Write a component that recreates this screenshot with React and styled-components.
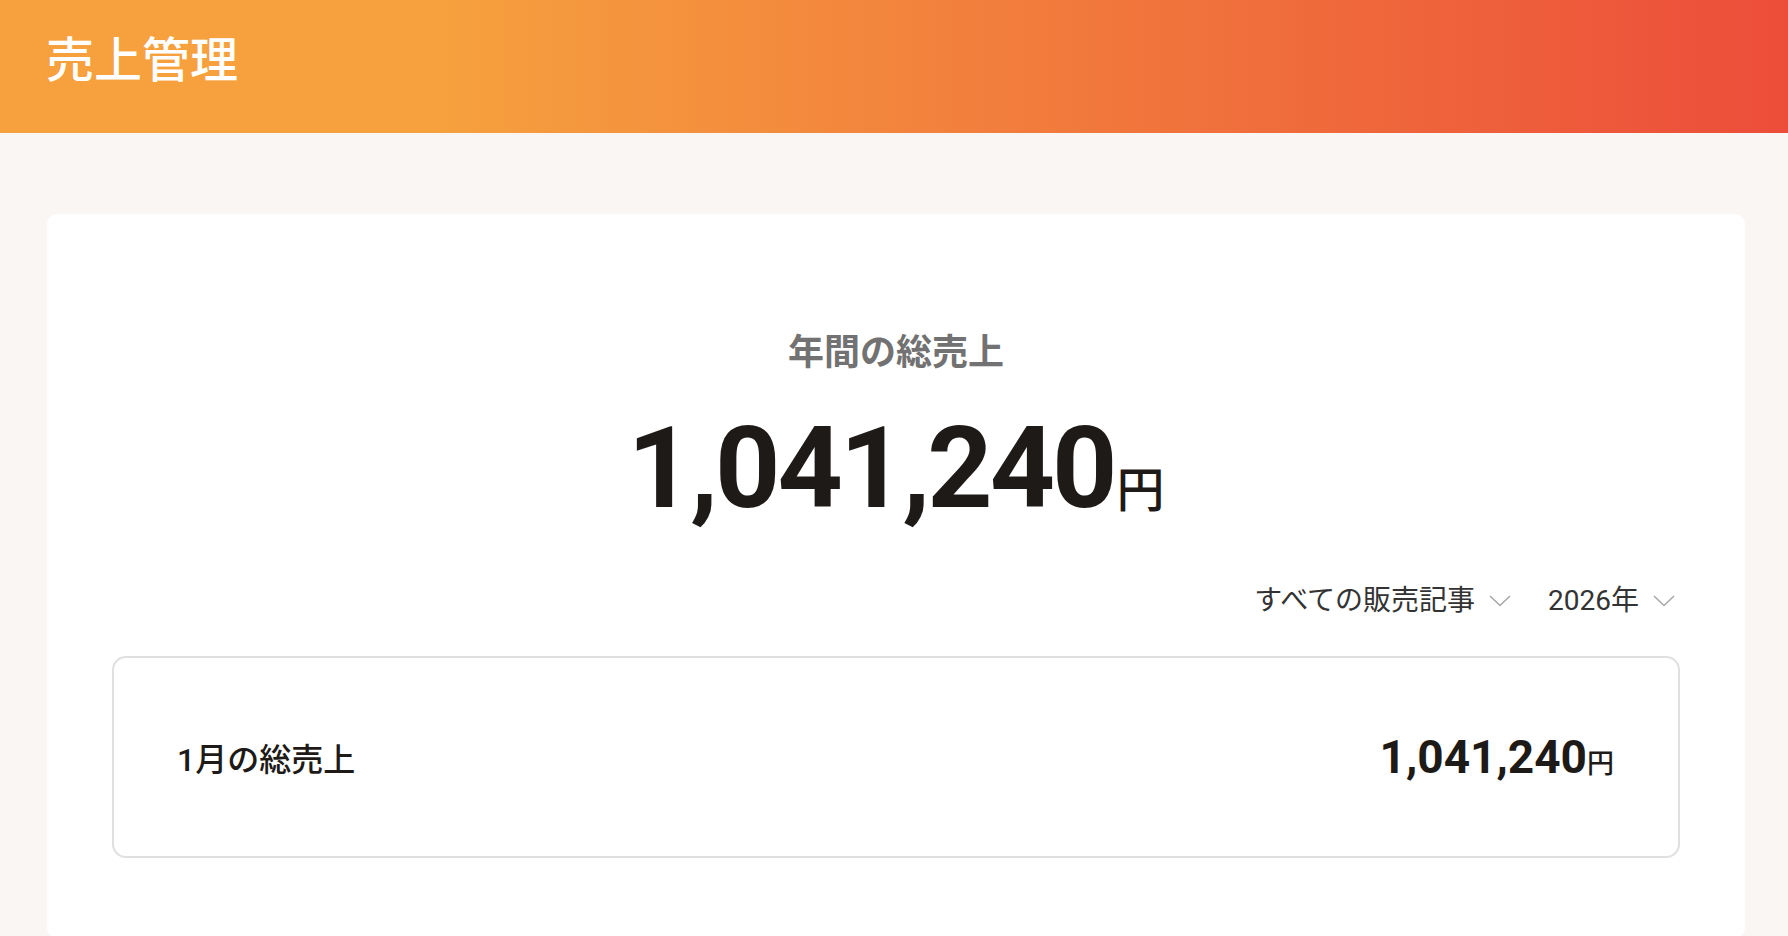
import React from 'react';
import styled, { createGlobalStyle } from 'styled-components';

const GlobalStyle = createGlobalStyle`
  html, body {
    margin: 0;
    padding: 0;
    background: #f9f6f3;
    font-family: Roboto, "Noto Sans CJK JP", sans-serif;
  }
`;

const Page = styled.div`
  min-height: 936px;
  background: #f9f6f3;
`;

const Header = styled.header`
  height: 133px;
  display: flex;
  align-items: center;
  padding-left: 46px;
  background: linear-gradient(90deg, #f6a13e 24%, #ec4d3a 100%);
`;

const HeaderTitle = styled.h1`
  margin: 0;
  color: #fff;
  font-size: 48px;
  font-weight: 500;
  line-height: 1;
  margin-top: -12px;
`;

const Main = styled.main`
  padding: 81px 43px 0 47px;
`;

const Card = styled.section`
  background: #fff;
  border-radius: 10px;
  padding: 119px 65px 80px 65px;
  display: flex;
  flex-direction: column;
  align-items: center;
`;

const SummaryLabel = styled.div`
  color: #727272;
  font-size: 36px;
  font-weight: 600;
  line-height: 40px;
`;

const TotalRow = styled.div`
  margin-top: ${p => p.$top || 0}px;
  display: flex;
  align-items: baseline;
  color: #1e1a17;
`;

const Amount = styled.span`
  font-family: Roboto, sans-serif;
  font-weight: 700;
  font-size: ${p => p.$size}px;
  line-height: 1;
  letter-spacing: ${p => p.$spacing || 0}px;
`;

const Yen = styled.span`
  font-size: ${p => p.$size}px;
  font-weight: 500;
  line-height: 1;
  margin-left: ${p => p.$gap || 0}px;
`;

const Filters = styled.div`
  align-self: stretch;
  margin-top: 58px;
  display: flex;
  justify-content: flex-end;
  gap: 37px;
  padding-right: 5px;
`;

const Filter = styled.button`
  display: flex;
  align-items: center;
  gap: 14px;
  padding: 0;
  border: none;
  background: none;
  font-family: Roboto, "Noto Sans CJK JP", sans-serif;
  font-size: 28px;
  line-height: 36px;
  color: #333;
  cursor: pointer;
`;

const MonthCard = styled.div`
  align-self: stretch;
  margin-top: 37px;
  height: 202px;
  box-sizing: border-box;
  border: 2px solid #e0e0e0;
  border-radius: 14px;
  display: flex;
  align-items: center;
  justify-content: space-between;
  padding: 0 64px 0 63px;
  color: #1e1a17;
`;

const MonthLabel = styled.div`
  font-size: 32px;
  font-weight: 500;
`;

const Chevron = () => (
  <svg width="22" height="12" viewBox="0 0 22 12" fill="none">
    <polyline points="1,1 11,10.5 21,1" stroke="#a8a8a8" strokeWidth="1.6" />
  </svg>
);

export default function App() {
  return (
    <Page>
      <GlobalStyle />
      <Header>
        <HeaderTitle>売上管理</HeaderTitle>
      </Header>
      <Main>
        <Card>
          <SummaryLabel>年間の総売上</SummaryLabel>
          <TotalRow $top={38}>
            <Amount $size={114} $spacing={-3}>1,041,240</Amount>
            <Yen $size={48} $gap={2}>円</Yen>
          </TotalRow>
          <Filters>
            <Filter>すべての販売記事<Chevron /></Filter>
            <Filter>2026年<Chevron /></Filter>
          </Filters>
          <MonthCard>
            <MonthLabel>1月の総売上</MonthLabel>
            <TotalRow>
              <Amount $size={46}>1,041,240</Amount>
              <Yen $size={27}>円</Yen>
            </TotalRow>
          </MonthCard>
        </Card>
      </Main>
    </Page>
  );
}
